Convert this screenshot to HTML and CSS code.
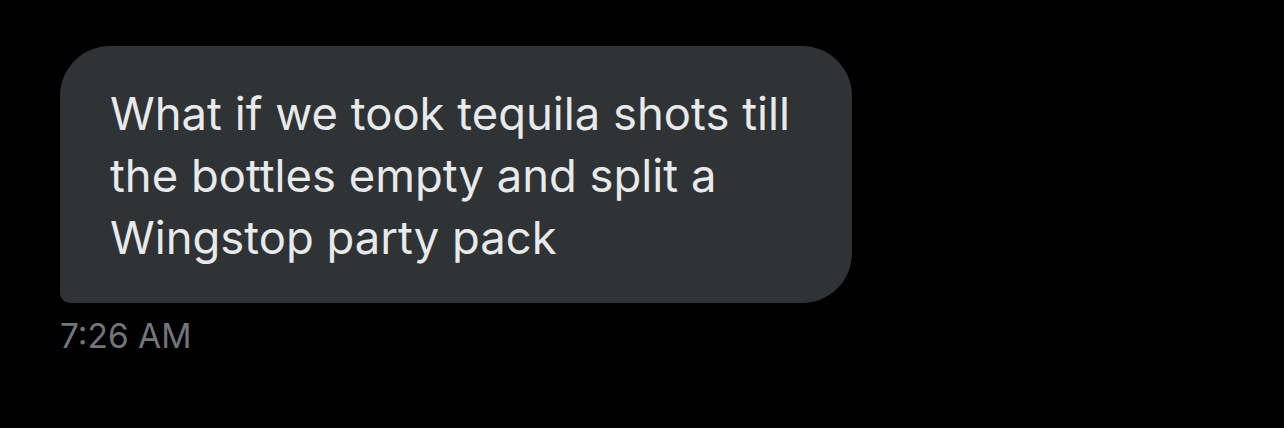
FILE: index.html
```html
<!DOCTYPE html>
<html>
<head>
<meta charset="utf-8">
<link rel="stylesheet" href="styles.css">
</head>
<body>
<div class="thread">
  <div class="message">
    <div class="bubble">What if we took tequila shots till<br>the bottles empty and split a<br>Wingstop party pack</div>
    <div class="time">7:26 AM</div>
  </div>
</div>
</body>
</html>
```

FILE: styles.css
```css
html, body {
  margin: 0;
  padding: 0;
  background: #000;
  width: 1284px;
  height: 428px;
  overflow: hidden;
}
.thread {
  padding: 46px 0 0 60px;
  font-family: "Inter", "Noto Sans", sans-serif;
}
.message {
  display: flex;
  flex-direction: column;
  align-items: flex-start;
}
.bubble {
  box-sizing: border-box;
  width: 792px;
  height: 257px;
  background: #2f3336;
  color: #e7e9ea;
  border-radius: 50px 50px 50px 10px;
  padding: 37px 40px 0 50px;
  font-size: 45.4px;
  line-height: 62px;
}
.time {
  margin-top: 13px;
  color: #71767b;
  font-size: 33.5px;
  line-height: 40px;
}
```
